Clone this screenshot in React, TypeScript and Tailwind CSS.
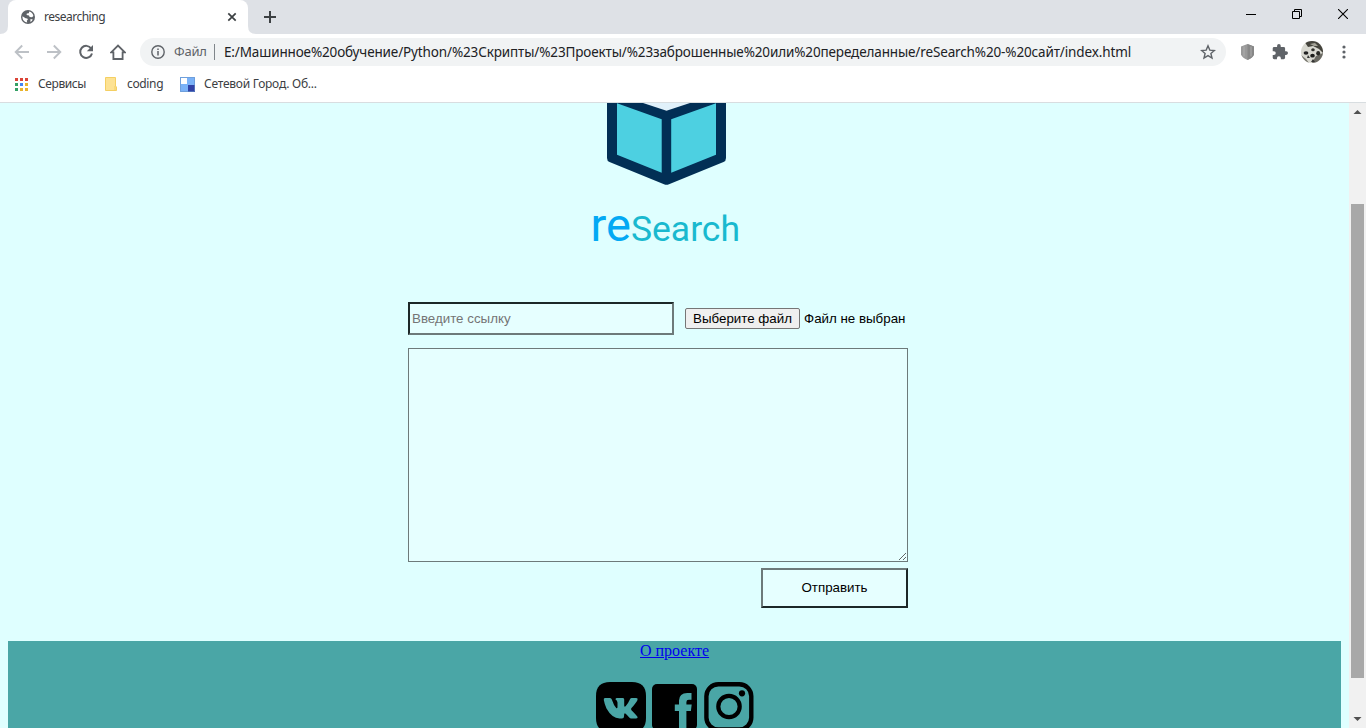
import React from "react";

const ui = "font-['Noto_Sans',sans-serif]";

function GlobeIcon() {
  return (
    <svg className="h-[14px] w-[14px]" viewBox="0 0 14 14">
      <circle cx="7" cy="7" r="7" fill="#5f6368" />
      <path d="M1.5 6.2 L4.6 8.2 L6.3 8.4 L6.9 9.6 L5.8 10.8 L6.2 12.6 Q2.2 11.8 1.5 8 Z" fill="#fff" />
      <path d="M8.2 1.6 Q11.6 2.4 12.4 6 L11 7.3 L8.6 6.9 L8 5.4 L5.6 5 L5.8 3.5 L7.8 3.2 Z" fill="#fff" />
      <path d="M9.5 9 L11.8 9.4 Q11 11 9.4 11.9 Z" fill="#fff" />
    </svg>
  );
}

function TabStrip() {
  return (
    <div className="flex h-[34px] shrink-0 bg-[#dee1e6]">
      <svg className="h-[34px] w-2" viewBox="0 0 8 34"><path d="M8 26 Q8 34 0 34 H8Z" fill="#fff" /></svg>
      <div className="flex w-[240px] items-center rounded-t-lg bg-white pl-[13px] pr-[10px]">
        <GlobeIcon />
        <span className="ml-[9px] grow text-[12px] tracking-[-0.5px] text-[#3c4043]">researching</span>
        <svg className="h-3 w-3" viewBox="0 0 12 12"><path d="M2.3 2.3 9.7 9.7M9.7 2.3 2.3 9.7" stroke="#3c4043" strokeWidth="1.7" /></svg>
      </div>
      <svg className="h-[34px] w-2" viewBox="0 0 8 34"><path d="M0 26 Q0 34 8 34 H0Z" fill="#fff" /></svg>
      <svg className="ml-2 mt-[11px] h-3 w-3" viewBox="0 0 12 12"><path d="M6 0V12M0 6H12" stroke="#3c4043" strokeWidth="2" /></svg>
      <div className="ml-auto flex items-start pr-[18px] pt-[9px]">
        <svg className="h-[11px] w-[10px]" viewBox="0 0 10 11"><path d="M0 5.5H10" stroke="#000" /></svg>
        <svg className="ml-[36px] h-[10px] w-[10px]" viewBox="0 0 10 10"><path d="M.5 2.5H7.5V9.5H.5ZM2.5 2V.5H9.5V7.5H8" fill="none" stroke="#000" /></svg>
        <svg className="ml-[36px] h-[10px] w-[10px]" viewBox="0 0 10 10"><path d="M0 0 10 10M10 0 0 10" stroke="#000" strokeWidth="1.1" /></svg>
      </div>
    </div>
  );
}

function Avatar() {
  return (
    <svg className="block h-[22px] w-[22px]" viewBox="0 0 22 22">
      <defs><clipPath id="avatar"><circle cx="11" cy="11" r="11" /></clipPath></defs>
      <g clipPath="url(#avatar)">
        <rect width="22" height="22" fill="#d8d8d0" />
        <path d="M3 0H22V12L18 8 12 5 7 6Z" fill="#45443d" />
        <path d="M9 3 14 2 17 5 13 5Z" fill="#a5a498" />
        <path d="M0 14 5 18 8 22H0Z" fill="#77766e" />
        <path d="M15 15 22 12V22H11Z" fill="#6a6962" />
        <ellipse cx="5" cy="12" rx="2.4" ry="1.8" fill="#222" />
        <ellipse cx="11.5" cy="14.7" rx="2.3" ry="1.9" fill="#1c1c1a" />
        <ellipse cx="12" cy="8.8" rx="1.8" ry="1.5" fill="#30302c" />
        <ellipse cx="17.2" cy="12.3" rx="2" ry="2.2" fill="#292925" />
        <path d="M7 14 9 17 6 17ZM12 18 14 21 10 21Z" fill="#333" />
      </g>
    </svg>
  );
}

function Toolbar() {
  return (
    <div className="flex h-[36px] shrink-0 items-center bg-white pl-[14px]">
      <svg className="h-4 w-4" viewBox="0 0 16 16"><path d="M15 8H2M8.2 1.5 1.7 8 8.2 14.5" fill="none" stroke="#bdc1c6" strokeWidth="1.9" /></svg>
      <svg className="ml-4 h-4 w-4" viewBox="0 0 16 16"><path d="M1 8H14M7.8 1.5 14.3 8 7.8 14.5" fill="none" stroke="#bdc1c6" strokeWidth="1.9" /></svg>
      <svg className="ml-4 h-4 w-4" viewBox="0 0 16 16"><path d="M13.2 4.5A6 6 0 1 0 14 9.5" fill="none" stroke="#5f6368" strokeWidth="2" /><path d="M15 1V7.2H8.8Z" fill="#5f6368" /></svg>
      <svg className="ml-4 h-4 w-4" viewBox="0 0 16 16"><path d="M1.2 8.3 8 1.5 14.8 8.3H12.6V15H3.4V8.3Z" fill="none" stroke="#5f6368" strokeWidth="1.8" /></svg>
      <div className="ml-[14px] flex h-7 w-[1086px] items-center rounded-full bg-[#f1f3f4] pl-[11px] pr-[10px]">
        <svg className="h-[14px] w-[14px]" viewBox="0 0 14 14"><circle cx="7" cy="7" r="6.2" fill="none" stroke="#5f6368" strokeWidth="1.4" /><path d="M7 6V10.5M7 3.4V5" stroke="#5f6368" strokeWidth="1.5" /></svg>
        <span className="ml-[9px] w-[40px] whitespace-nowrap text-[13px] tracking-[-0.2px] text-[#5f6368]">Файл</span>
        <span className="h-4 w-px bg-[#80868b]" />
        <span className="ml-[9px] whitespace-nowrap text-[13.5px] tracking-[-0.133px] text-[#202124]">E:/Машинное%20обучение/Python/%23Скрипты/%23Проекты/%23заброшенные%20или%20переделанные/reSearch%20-%20сайт/index.html</span>
        <svg className="ml-auto h-4 w-4" viewBox="0 0 16 16"><path d="M8 1.8 9.8 6.1 14.4 6.5 10.9 9.5 12 14 8 11.6 4 14 5.1 9.5 1.6 6.5 6.2 6.1Z" fill="none" stroke="#5f6368" strokeWidth="1.4" /></svg>
      </div>
      <svg className="ml-[15px] h-4 w-[13px]" viewBox="0 0 13 16"><path d="M6.5 0 13 2.6V10.5Q12 13.5 6.5 16 1 13.5 0 10.5V2.6Z" fill="#999" /><path d="M6.5 0 13 2.6V10.5Q12 13.5 6.5 16Z" fill="#878787" /><path d="M3 2.5V12.5M10 2.5V12.5" stroke="#adadad" /></svg>
      <svg className="ml-[18px] h-4 w-4" viewBox="1 1 22 22"><path d="M20.5 11H19V7a2 2 0 0 0-2-2h-4V3.5a2.5 2.5 0 0 0-5 0V5H4a2 2 0 0 0-2 2v3.8h1.5a2.7 2.7 0 0 1 0 5.4H2V20a2 2 0 0 0 2 2h3.8v-1.5a2.7 2.7 0 0 1 5.4 0V22H17a2 2 0 0 0 2-2v-4h1.5a2.5 2.5 0 0 0 0-5Z" fill="#5f6368" /></svg>
      <span className="ml-[13px]"><Avatar /></span>
      <svg className="ml-[19px] h-[14px] w-1" viewBox="0 0 4 14"><g fill="#5f6368"><circle cx="2" cy="2" r="1.6" /><circle cx="2" cy="7" r="1.6" /><circle cx="2" cy="12" r="1.6" /></g></svg>
    </div>
  );
}

const apps = ["bg-[#db4437]", "bg-[#db4437]", "bg-[#db4437]", "bg-[#34a065]", "bg-[#4285f4]", "bg-[#e9b32b]", "bg-[#34a065]", "bg-[#e9b32b]", "bg-[#e9b32b]"];

function Bookmarks() {
  return (
    <div className="flex h-[33px] shrink-0 items-center border-b border-[#d8dde0] bg-white pb-1 pl-[15px] text-[12px] text-[#3c4043]">
      <div className="grid grid-cols-3 gap-[2px]">{apps.map((c, i) => <span key={i} className={`h-[3px] w-[3px] ${c}`} />)}</div>
      <span className="ml-[10px] w-[67px] whitespace-nowrap tracking-[-0.4px]">Сервисы</span>
      <svg className="h-[14px] w-3" viewBox="0 0 12 14"><path d="M.5.5H10.5V9L11.5 10V13.5H.5Z" fill="#fde293" stroke="#f4cf63" /><path d="M10 9V13.5" stroke="#f4cf63" /></svg>
      <span className="ml-[10px] w-[53px] whitespace-nowrap tracking-[-0.35px]">coding</span>
      <svg className="h-[15px] w-[15px]" viewBox="0 0 15 15"><rect width="15" height="15" fill="#7ab2f8" /><path d="M1 1H7V7H1Z" fill="#fff" /><path d="M8 8H15V15H8Z" fill="#3142a6" /><path d="M.5.5H14.5V14.5H.5Z" fill="none" stroke="#6793c8" strokeOpacity=".6" /></svg>
      <span className="ml-[9px] whitespace-nowrap tracking-[-0.24px]">Сетевой Город. Об...</span>
    </div>
  );
}

function Logo() {
  return (
    <svg className="ml-[607px] block h-[82px] w-[119px] shrink-0" viewBox="607 103 119 82">
      <path d="M607 103H726V158Q726 161 723.5 162L669 184.2Q666.5 185.4 664 184.2L609.5 162Q607 161 607 158Z" fill="#022f55" />
      <path d="M643 103H690L666.5 110.7Z" fill="#e1f1fa" />
      <path d="M617 103.3 661.7 119.2V172.7L617 154.7ZM716 103.3 671.2 119.2V172.7L716 154.7Z" fill="#4dd0e1" />
    </svg>
  );
}

function SocialIcons() {
  return (
    <div className="ml-[588px] mt-[22px] flex h-[50px]">
      <svg className="h-[50px] w-[50px]" viewBox="0 0 50 50">
        <path d="M14 0H36Q50 0 50 14V36Q50 50 36 50H14Q0 50 0 36V14Q0 0 14 0Z" />
        <path d="M9 16H14Q15.3 16 15.8 17.5 17.8 23.5 20.2 26 21.5 27.2 21.5 24.5V20.5Q21.4 18.5 19.4 17.2 19.8 16 21 16H27Q28.2 16 28.2 17.5V23.5Q28.2 25.4 29.6 24.2 32.2 21.4 34 17.2 34.5 16 35.7 16H40.2Q42.2 16 41.5 18 40 21.2 35.5 26 34.5 27.1 35.5 28.2 39.4 32 41.3 34.6 42.2 36.5 40 36.5H35.2Q34 36.5 33 35.3 29.5 31.2 28.7 31.3 28 31.6 28 34.5 28 36.5 26 36.5H23.6Q16 36.3 10.5 26.5 8.6 22.4 7.8 18 7.5 16 9 16Z" fill="#4aa6a6" />
      </svg>
      <svg className="ml-[6px] mt-[2px] h-[46px] w-[45px]" viewBox="0 0 45 46">
        <rect width="45" height="46" rx="5" />
        <path d="M27 46V27H22.8V20.5H27V16.5Q27.2 9.3 35.3 9H39.5V15.8H36.8Q34.4 15.8 34.4 18V20.5H39.7L38.9 27H34.4V46Z" fill="#4aa6a6" />
      </svg>
      <svg className="ml-[7px] h-[50px] w-[50px]" viewBox="0 0 50 50">
        <rect x="2.4" y="2.3" width="44.9" height="45.2" rx="12" fill="none" stroke="#000" strokeWidth="4.4" />
        <circle cx="25" cy="24.5" r="10.7" fill="none" stroke="#000" strokeWidth="4.2" />
        <circle cx="38" cy="11.3" r="3.1" />
      </svg>
    </div>
  );
}

export default function App() {
  return (
    <div className={`flex h-[728px] w-[1366px] flex-col overflow-hidden ${ui}`}>
      <TabStrip />
      <Toolbar />
      <Bookmarks />
      <div className="flex min-h-0 grow">
        <main className="flex w-[1349px] flex-col overflow-hidden bg-[#dfffff]">
          <Logo />
          <h1 className="ml-[590.5px] mt-3 h-[56px] whitespace-nowrap font-['Roboto',sans-serif] leading-[56px] font-normal">
            <span className="text-[47px] text-[#03a9f4]">re</span><span className="text-[35.5px] text-[#19b9cf]">Search</span>
          </h1>
          <form className="ml-[408px] mt-[49px] flex h-[306px] w-[500px] shrink-0 flex-col font-['Liberation_Sans',sans-serif] text-[13.333px]" onSubmit={(e) => e.preventDefault()}>
            <div className="flex h-[33px] items-center">
              <input placeholder="Введите ссылку" className="h-[33px] w-[266px] border-2 border-t-[#1d2828] border-r-[#6d7a7a] border-b-[#6d7a7a] border-l-[#1d2828] bg-[#e6ffff] px-[2px] placeholder:text-[#757575]" />
              <button type="button" className="ml-[11px] h-[21px] w-[115px] whitespace-nowrap rounded-[2px] border border-[#767676] bg-[#efefef] leading-[19px]">Выберите файл</button>
              <span className="ml-1 whitespace-nowrap">Файл не выбран</span>
            </div>
            <textarea className="mt-[13px] block h-[214px] w-[500px] shrink-0 resize border border-[#6d7a7a] bg-[#e6ffff]" />
            <button className="mt-[6px] h-10 w-[147px] shrink-0 self-end border-2 border-t-[#6d7a7a] border-r-[#1d2828] border-b-[#1d2828] border-l-[#6d7a7a] bg-[#e6ffff]">Отправить</button>
          </form>
          <footer className="ml-2 mt-[33px] h-[100px] w-[1333px] shrink-0 bg-[#4aa6a6]">
            <a href="#" className="ml-[632px] block h-[19px] w-max font-['Liberation_Serif',serif] text-[16px] leading-[19px] text-[#0000ee] underline">О проекте</a>
            <SocialIcons />
          </footer>
        </main>
        <div className="flex w-[17px] flex-col items-center bg-[#f1f1f1]">
          <svg className="h-[17px] w-[17px]" viewBox="0 0 17 17"><path d="M4.5 11 8.5 7 12.5 11Z" fill="#505050" /></svg>
          <div className="mt-[84px] h-[474px] w-[13px] bg-[#a8a8a8]" />
          <svg className="mt-auto h-[17px] w-[17px]" viewBox="0 0 17 17"><path d="M4.5 6 8.5 10 12.5 6Z" fill="#505050" /></svg>
        </div>
      </div>
    </div>
  );
}
